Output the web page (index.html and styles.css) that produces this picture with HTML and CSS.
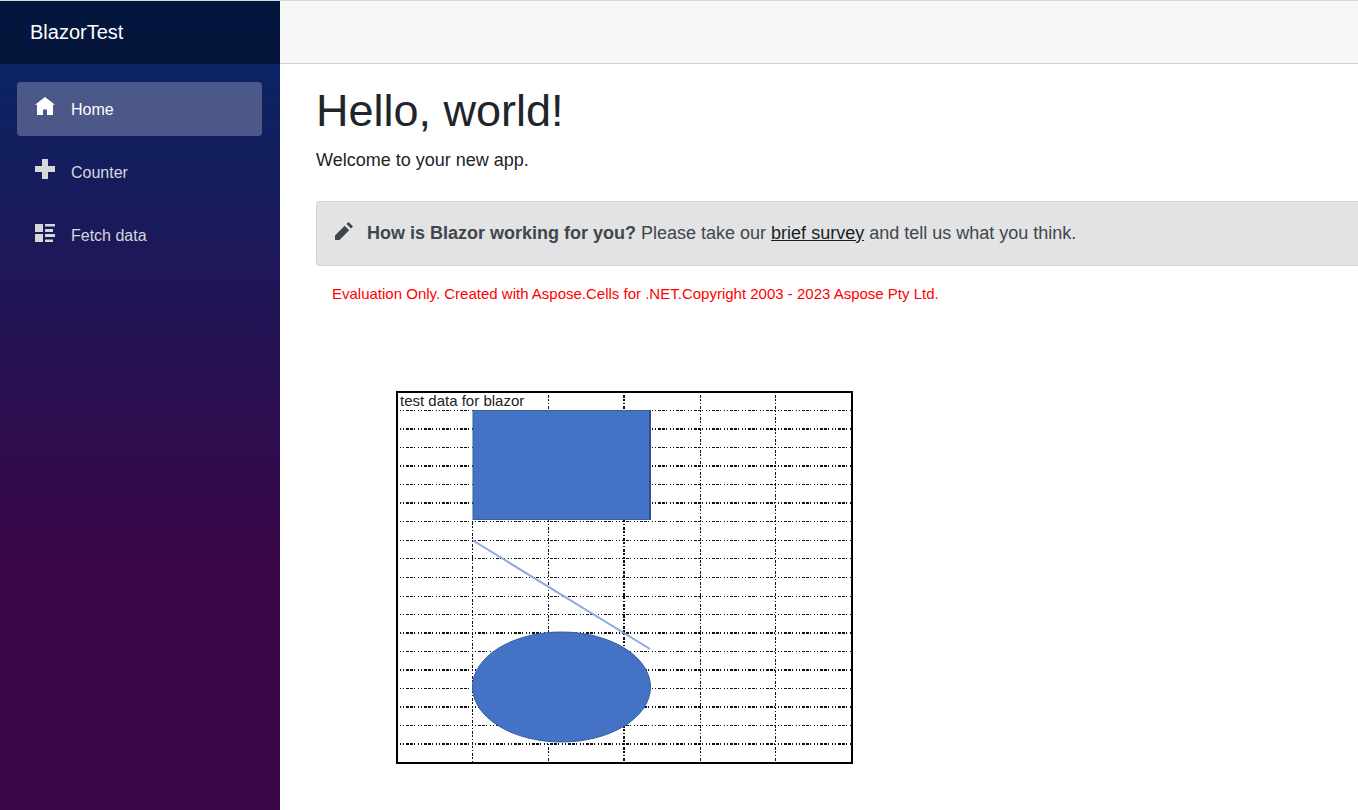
FILE: index.html
```html
<!DOCTYPE html>
<html lang="en">
<head>
<meta charset="utf-8">
<title>BlazorTest</title>
<link rel="stylesheet" href="styles.css">
</head>
<body>
<div class="page">
  <aside class="sidebar">
    <div class="brand-row"><a class="brand" href="#">BlazorTest</a></div>
    <nav class="nav">
      <a class="nav-link active" href="#home">
        <svg class="nav-icon" viewBox="0 0 8 8" aria-hidden="true"><path d="M4 .4l-4 3.100h.8v4.100h2.400v-2.200h1.600v2.200h2.400v-4.100h.8z"/></svg>
        <span>Home</span>
      </a>
      <a class="nav-link" href="#counter">
        <svg class="nav-icon" viewBox="0 0 8 8" aria-hidden="true"><path d="M2.800 0v2.800h-2.800v2.400h2.800v2.800h2.400v-2.800h2.800v-2.400h-2.800v-2.800z"/></svg>
        <span>Counter</span>
      </a>
      <a class="nav-link" href="#fetchdata">
        <svg class="nav-icon" viewBox="0 0 8 8" aria-hidden="true"><path d="M0 .8v3.200h3.200v-3.200zm4 0v1h4v-1zm0 2v1.200h3.200v-1.200zm-4 2v3.200h3.200v-3.200zm4 0v1.200h4v-1.200zm0 2.200v1h3.200v-1z"/></svg>
        <span>Fetch data</span>
      </a>
    </nav>
  </aside>
  <main class="main">
    <div class="top-row"></div>
    <article class="content">
      <h1 class="title">Hello, world!</h1>
      <p class="welcome">Welcome to your new app.</p>
      <div class="alert">
        <svg class="pencil" viewBox="0 0 8 8" aria-hidden="true"><path d="M6 0l-.9.9 2 2 .9-.9-2-2zm-1.700 1.700l-4.300 4.300v2h2l4.300-4.300-2-2z"/></svg>
        <p class="alert-text"><strong>How is Blazor working for you?</strong> Please take our <a class="survey" href="#survey">brief survey</a> and tell us what you think.</p>
      </div>
      <p class="notice">Evaluation Only. Created with Aspose.Cells for .NET.Copyright 2003 - 2023 Aspose Pty Ltd.</p>
      <svg class="sheet" width="460" height="376" viewBox="0 0 460 376" role="img" aria-label="Worksheet with a rectangle, a line and an ellipse">
        <path class="grid thin" d="M5 20.5H456M5 57.5H456M5 94.5H456M5 131.5H456M5 150.5H456M5 168.5H456M5 187.5H456M5 206.5H456M5 224.5H456M5 261.5H456M5 298.5H456M5 335.5H456"/>
        <path class="grid thick" d="M5 39H456M5 76H456M5 113H456M5 243H456M5 280H456M5 317H456M5 354H456"/>
        <path class="column thin" d="M77.5 132V372M153.5 5V372M305.5 5V372M380.5 5V372"/>
        <path class="column thick" d="M229 5V372"/>
        <rect class="frame" x="2" y="2" width="455" height="371"/>
        <rect class="shape" x="78" y="20.5" width="177" height="109"/>
        <path class="edge" d="M255 20V130"/>
        <path class="connector" d="M78 150.500L255 259"/>
        <ellipse class="shape" cx="166.500" cy="297" rx="89" ry="55"/>
        <text class="cell" x="5" y="16">test data for blazor</text>
      </svg>
    </article>
  </main>
</div>
</body>
</html>
```
FILE: styles.css
```css
* { box-sizing: border-box; }
body {
  margin: 0;
  font-family: "Liberation Sans", Arial, sans-serif;
  font-size: 18px;
  color: #212529;
  background: #fff;
}
.page {
  display: flex;
  min-height: 100vh;
  border-top: 1px solid #d6d8d8;
}
.sidebar {
  flex: 0 0 280px;
  background: linear-gradient(180deg, rgb(5, 39, 103) 0%, #3a0647 70%);
}
.brand-row {
  display: flex;
  align-items: center;
  height: 63px;
  padding-left: 30px;
  background: rgba(0, 0, 0, 0.4);
}
.brand { color: #fff; font-size: 20px; text-decoration: none; }
.nav {
  display: flex;
  flex-direction: column;
  gap: 9px;
  padding: 18px 18px 0 17px;
}
.nav-link {
  display: flex;
  align-items: center;
  gap: 16px;
  height: 54px;
  padding: 0 18px;
  border-radius: 4px;
  color: #d7d7d7;
  font-size: 16px;
  line-height: 20px;
  text-decoration: none;
}
.nav-link span { padding-top: 2px; }
.nav-link.active { background: rgba(255, 255, 255, 0.25); color: #fff; }
.nav-icon { width: 20px; height: 20px; margin-bottom: 6px; fill: currentColor; }
.main { flex: 1; min-width: 0; overflow: hidden; }
.top-row {
  height: 63px;
  background: #f7f7f7;
  border-bottom: 1px solid #d6d5d5;
}
.content { padding: 20px 0 0 36px; }
.title { margin: 0; font-size: 45px; line-height: 54px; font-weight: 400; }
.welcome { margin: 9px 0 27px; line-height: 27px; }
.alert {
  display: flex;
  align-items: center;
  gap: 14px;
  height: 65px;
  padding-left: 18px;
  color: #41464b;
  background: #e2e3e5;
  border: 1px solid #d3d6d8;
  border-right: 0;
  border-radius: 4px 0 0 4px;
}
.pencil { width: 18px; height: 18px; margin-bottom: 5px; fill: currentColor; }
.alert-text { margin: 0; }
.survey { color: #1a1e21; }
.notice { margin: 18px 0 0 16px; color: #f00; font-size: 15px; line-height: 20px; }
.sheet { display: block; margin: 86px 0 0 79px; }
.grid, .column { fill: none; stroke: #111; }
.grid { stroke-dasharray: 1 2 1 2 3 1 3 1 1 3; }
.column { stroke-dasharray: 3 1 2 2 1 2; }
.thin { stroke-width: 1; }
.thick { stroke-width: 2; }
.frame { fill: none; stroke: #000; stroke-width: 2; }
.shape { fill: #4472c4; stroke: #38609f; stroke-width: 1; }
.edge { stroke: #2f528f; stroke-width: 2; }
.connector { stroke: #8fa9de; stroke-width: 2; }
.cell { fill: #222; font-size: 15px; }
```
